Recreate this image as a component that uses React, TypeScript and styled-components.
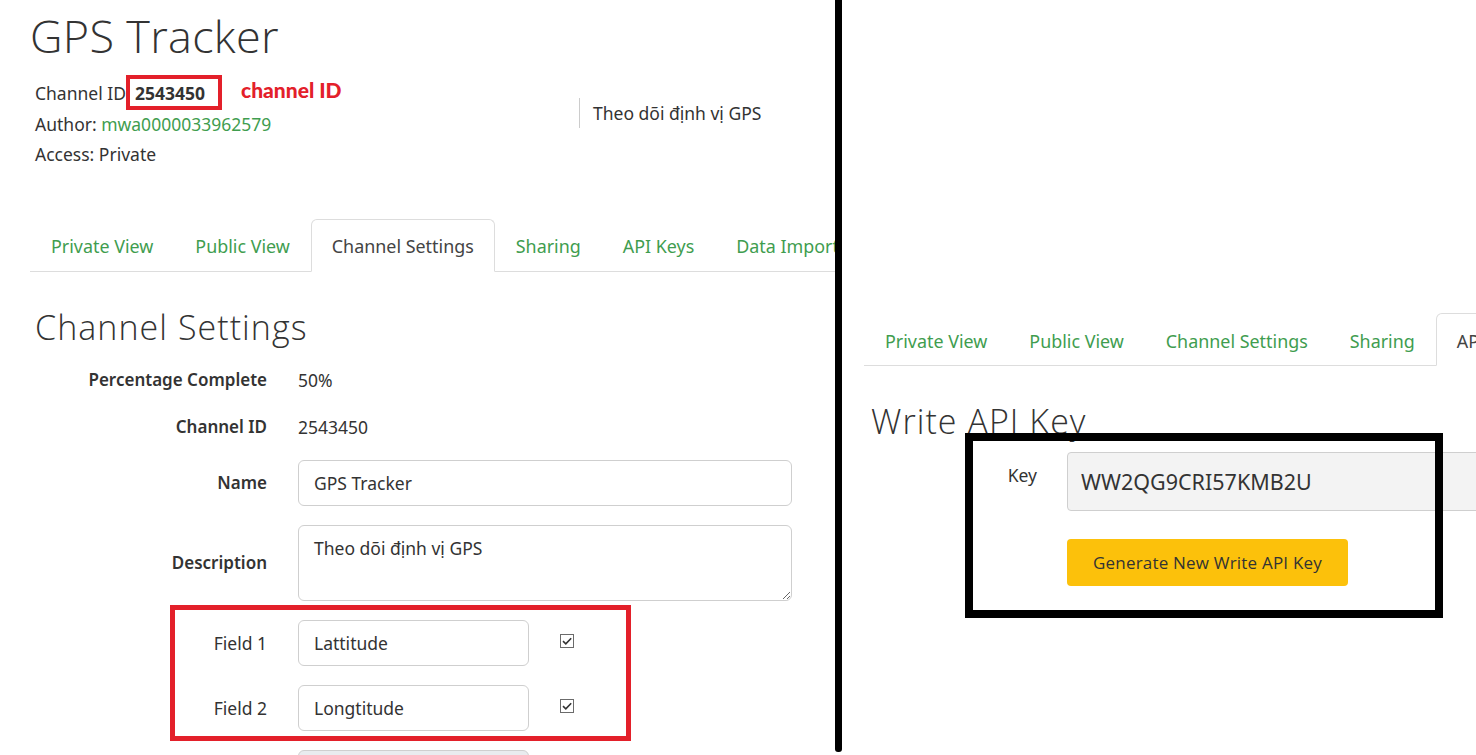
import React from "react";
import styled, { createGlobalStyle } from "styled-components";

const GlobalStyle = createGlobalStyle`
  html, body { margin: 0; padding: 0; background: #fff; }
  body { font-family: "Noto Sans", "Liberation Sans", sans-serif; color: #333; }
  * { box-sizing: border-box; }
`;

const GREEN = "#3f9d4f";
const RED = "#e3202a";

const Page = styled.div`
  display: flex;
  width: 1476px;
  height: 755px;
  overflow: hidden;
  background: #fff;
`;

const LeftPane = styled.section`
  position: relative;
  flex: none;
  width: 835px;
  height: 755px;
  padding-left: 30px;
  overflow: hidden;
`;

const Divider = styled.div`
  flex: none;
  width: 7px;
  height: 752px;
  background: #000;
  border-radius: 0 0 3px 3px;
`;

const RightPane = styled.section`
  position: relative;
  flex: 1;
  min-width: 0;
  height: 755px;
  padding-left: 22px;
  overflow: hidden;
`;

const Title = styled.h1`
  margin: 9px 0 0;
  font-family: "Open Sans", "Noto Sans", sans-serif;
  font-weight: 300;
  font-size: 45px;
  line-height: 54px;
  letter-spacing: 0.3px;
  color: #333;
`;

const InfoRow = styled.div`
  display: flex;
  align-items: flex-start;
  margin-top: 15px;
  padding-left: 5px;
`;

const MetaList = styled.div`
  flex: none;
  width: 544px;
  display: flex;
  flex-direction: column;
`;

const MetaLine = styled.div`
  font-size: 17.5px;
  line-height: 30.5px;
  color: #333;
  white-space: nowrap;
`;

const Strong = styled.b`
  display: inline-block;
  margin-left: 9px;
  font-weight: 700;
`;

const GreenLink = styled.a`
  color: ${GREEN};
  text-decoration: none;
`;

const Blurb = styled.div`
  margin-top: 20px;
  border-left: 1px solid #ccc;
  padding-left: 13px;
  height: 30px;
  font-size: 17.5px;
  line-height: 30px;
  color: #333;
  white-space: nowrap;
`;

const TabList = styled.nav<{ $top: number }>`
  display: flex;
  flex-wrap: nowrap;
  margin-top: ${(p) => p.$top}px;
  border-bottom: 1px solid #ddd;
  height: 53px;
`;

const Tab = styled.a<{ $active?: boolean }>`
  flex: none;
  display: flex;
  align-items: center;
  height: 53px;
  padding: 2px 20px 0;
  margin-bottom: -1px;
  border: 1px solid transparent;
  border-radius: 6px 6px 0 0;
  font-size: 17.9px;
  white-space: nowrap;
  text-decoration: none;
  color: ${(p) => (p.$active ? "#444" : GREEN)};
  background: ${(p) => (p.$active ? "#fff" : "transparent")};
  border-color: ${(p) => (p.$active ? "#ddd #ddd #fff" : "transparent")};
`;

const SectionHeading = styled.h2<{ $top: number; $indent: number }>`
  margin: ${(p) => p.$top}px 0 0 ${(p) => p.$indent}px;
  font-family: "Open Sans", "Noto Sans", sans-serif;
  font-weight: 300;
  font-size: 34px;
  line-height: 40px;
  letter-spacing: 1.05px;
  color: #333;
  white-space: nowrap;
`;

const Form = styled.div`
  display: flex;
  flex-direction: column;
  gap: 19px;
  margin-top: 19px;
`;

const FormRow = styled.div`
  display: flex;
  align-items: center;
  min-height: 28px;
`;

const RowLabel = styled.div<{ $bold?: boolean }>`
  flex: none;
  width: 237px;
  min-height: 28px;
  text-align: right;
  font-size: ${(p) => (p.$bold ? 17 : 17.5)}px;
  line-height: 28px;
  font-weight: ${(p) => (p.$bold ? 600 : 400)};
  color: #333;
  white-space: nowrap;
`;

const Control = styled.div`
  display: flex;
  align-items: center;
  margin-left: 31px;
  font-size: 17.5px;
  color: #333;
`;

const TextInput = styled.input<{ $w: number }>`
  width: ${(p) => p.$w}px;
  height: 46px;
  padding: 0 15px;
  border: 1px solid #cfcfcf;
  border-radius: 6px;
  font-family: inherit;
  font-size: 17.5px;
  color: #333;
  background: ${(p) => (p.disabled ? "#e9ecef" : "#fff")};
  outline: none;
`;

const TextArea = styled.textarea`
  width: 494px;
  height: 76px;
  padding: 10px 15px;
  border: 1px solid #cfcfcf;
  border-radius: 6px;
  font-family: inherit;
  font-size: 17.5px;
  line-height: 24px;
  color: #333;
  resize: vertical;
  outline: none;
`;

const CheckBox = styled.span`
  display: inline-flex;
  align-items: center;
  justify-content: center;
  width: 14px;
  height: 14px;
  margin: 0 0 4px 31px;
  border: 1px solid #6b6b6b;
  background: #fff;
`;

const Annotation = styled.div<{ $x: number; $y: number; $w: number; $h: number; $b: number; $c: string }>`
  position: absolute;
  left: ${(p) => p.$x}px;
  top: ${(p) => p.$y}px;
  width: ${(p) => p.$w}px;
  height: ${(p) => p.$h}px;
  border: ${(p) => p.$b}px solid ${(p) => p.$c};
  pointer-events: none;
`;

const AnnotationText = styled.div`
  position: absolute;
  left: 241px;
  top: 76px;
  font-family: "Lato", "Noto Sans", sans-serif;
  font-weight: 900;
  font-size: 21px;
  line-height: 28px;
  color: ${RED};
  white-space: nowrap;
`;

const KeyForm = styled.div`
  display: flex;
  flex-direction: column;
  gap: 28px;
  margin: 11px 0 0 7px;
`;

const KeyRow = styled.div`
  display: flex;
  align-items: flex-start;
`;

const KeyLabel = styled.div`
  flex: none;
  width: 166px;
  padding-top: 11px;
  text-align: right;
  font-size: 17.5px;
  line-height: 24px;
  color: #333;
`;

const KeyInput = styled.input`
  flex: none;
  width: 520px;
  height: 59px;
  margin-left: 30px;
  padding: 0 13px;
  border: 1px solid #cfcfcf;
  border-radius: 4px;
  background: #f3f3f3;
  font-family: inherit;
  font-size: 21.5px;
  color: #333;
  outline: none;
`;

const GenerateButton = styled.button`
  width: 281px;
  height: 47px;
  margin-left: 196px;
  border: none;
  border-radius: 4px;
  background: #fcc10b;
  font-family: "Open Sans", "Noto Sans", sans-serif;
  font-size: 17px;
  letter-spacing: 0.2px;
  color: #333;
  cursor: pointer;
`;

const Check = () => (
  <svg width="12" height="12" viewBox="0 0 12 12" aria-hidden>
    <path d="M2 6.2 L4.8 8.8 L10.2 3.2" fill="none" stroke="#333" strokeWidth="1.6" />
  </svg>
);

const tabs = ["Private View", "Public View", "Channel Settings", "Sharing", "API Keys", "Data Import"];

export default function App() {
  return (
    <>
      <GlobalStyle />
      <Page>
        <LeftPane>
          <Title>GPS Tracker</Title>
          <InfoRow>
            <MetaList>
              <MetaLine>
                Channel ID<Strong>2543450</Strong>
              </MetaLine>
              <MetaLine>
                Author: <GreenLink href="#">mwa0000033962579</GreenLink>
              </MetaLine>
              <MetaLine>Access: Private</MetaLine>
            </MetaList>
            <Blurb>Theo dõi định vị GPS</Blurb>
          </InfoRow>

          <TabList $top={49}>
            {tabs.map((t) => (
              <Tab key={t} href="#" $active={t === "Channel Settings"}>
                {t}
              </Tab>
            ))}
          </TabList>

          <SectionHeading $top={35} $indent={5}>
            Channel Settings
          </SectionHeading>

          <Form>
            <FormRow>
              <RowLabel $bold>Percentage Complete</RowLabel>
              <Control>50%</Control>
            </FormRow>
            <FormRow>
              <RowLabel $bold>Channel ID</RowLabel>
              <Control>2543450</Control>
            </FormRow>
            <FormRow>
              <RowLabel $bold>Name</RowLabel>
              <Control>
                <TextInput $w={494} value="GPS Tracker" readOnly />
              </Control>
            </FormRow>
            <FormRow>
              <RowLabel $bold>Description</RowLabel>
              <Control>
                <TextArea value="Theo dõi định vị GPS" readOnly />
              </Control>
            </FormRow>
            <FormRow>
              <RowLabel>Field 1</RowLabel>
              <Control>
                <TextInput $w={231} value="Lattitude" readOnly />
                <CheckBox>
                  <Check />
                </CheckBox>
              </Control>
            </FormRow>
            <FormRow>
              <RowLabel>Field 2</RowLabel>
              <Control>
                <TextInput $w={231} value="Longtitude" readOnly />
                <CheckBox>
                  <Check />
                </CheckBox>
              </Control>
            </FormRow>
            <FormRow>
              <RowLabel />
              <Control>
                <TextInput $w={231} value="" disabled />
              </Control>
            </FormRow>
          </Form>

          <Annotation $x={126} $y={75} $w={96} $h={35} $b={4} $c={RED} />
          <AnnotationText>channel ID</AnnotationText>
          <Annotation $x={170} $y={605} $w={461} $h={136} $b={5} $c={RED} />
        </LeftPane>

        <Divider />

        <RightPane>
          <TabList $top={313}>
            {tabs.map((t) => (
              <Tab key={t} href="#" $active={t === "API Keys"}>
                {t}
              </Tab>
            ))}
          </TabList>

          <SectionHeading $top={35} $indent={7}>
            Write API Key
          </SectionHeading>

          <KeyForm>
            <KeyRow>
              <KeyLabel>Key</KeyLabel>
              <KeyInput value="WW2QG9CRI57KMB2U" readOnly />
            </KeyRow>
            <KeyRow>
              <GenerateButton>Generate New Write API Key</GenerateButton>
            </KeyRow>
          </KeyForm>

          <Annotation $x={123} $y={433} $w={478} $h={185} $b={8} $c="#000" />
        </RightPane>
      </Page>
    </>
  );
}
